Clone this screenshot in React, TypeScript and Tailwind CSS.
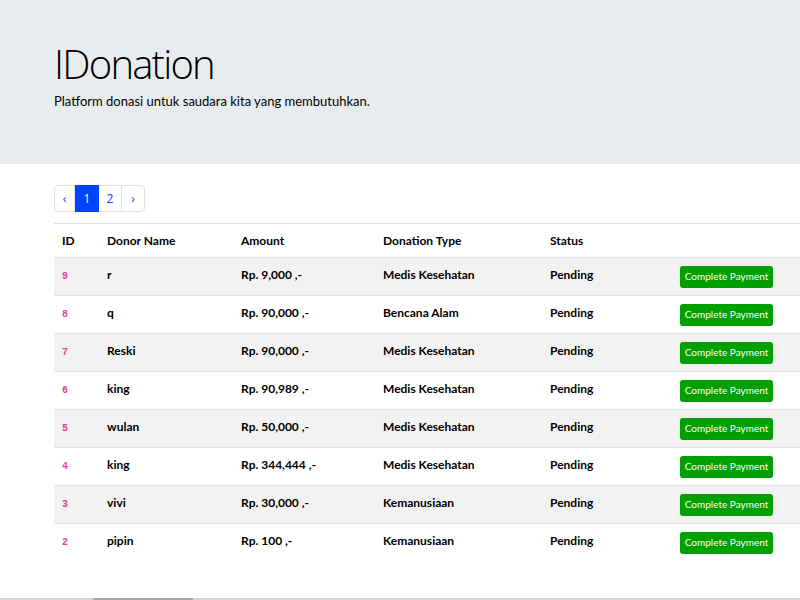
import React from "react";

type Donation = {
  id: number;
  name: string;
  amount: string;
  type: string;
  status: string;
};

const donations: Donation[] = [
  { id: 9, name: "r", amount: "Rp. 9,000 ,-", type: "Medis Kesehatan", status: "Pending" },
  { id: 8, name: "q", amount: "Rp. 90,000 ,-", type: "Bencana Alam", status: "Pending" },
  { id: 7, name: "Reski", amount: "Rp. 90,000 ,-", type: "Medis Kesehatan", status: "Pending" },
  { id: 6, name: "king", amount: "Rp. 90,989 ,-", type: "Medis Kesehatan", status: "Pending" },
  { id: 5, name: "wulan", amount: "Rp. 50,000 ,-", type: "Medis Kesehatan", status: "Pending" },
  { id: 4, name: "king", amount: "Rp. 344,444 ,-", type: "Medis Kesehatan", status: "Pending" },
  { id: 3, name: "vivi", amount: "Rp. 30,000 ,-", type: "Kemanusiaan", status: "Pending" },
  { id: 2, name: "pipin", amount: "Rp. 100 ,-", type: "Kemanusiaan", status: "Pending" },
];

const font = { fontFamily: "Lato, 'Open Sans', sans-serif" };
const titleFont = { fontFamily: "'Open Sans', 'Noto Sans', sans-serif" };

export default function App() {
  return (
    <div className="min-h-[600px] bg-white overflow-hidden text-black" style={font}>
      <header className="bg-[#e9ecef] h-[164px] pl-[54px] pt-[40px]">
        <h1 className="text-[40px] font-light leading-[48px] tracking-[-1.8px]" style={titleFont}>
          IDonation
        </h1>
        <p className="text-[13px] leading-[18px] mt-[4px]">
          Platform donasi untuk saudara kita yang membutuhkan.
        </p>
      </header>

      <div className="pl-[54px] pt-[21px]">
        <nav className="flex h-[27px] w-fit text-[12px]" style={titleFont}>
          <span className="w-[21px] flex items-center justify-center border border-[#dee2e6] rounded-l-[4px] text-[#0040ff]">‹</span>
          <span className="w-[24px] flex items-center justify-center bg-[#0043ff] text-white border border-[#0043ff]">1</span>
          <span className="w-[22px] flex items-center justify-center border-y border-[#dee2e6] text-[#0040ff]">2</span>
          <span className="w-[24px] flex items-center justify-center border border-[#dee2e6] rounded-r-[4px] text-[#0040ff]">›</span>
        </nav>

        <table className="mt-[11px] w-[820px] border-collapse text-[12px] font-bold">
          <thead>
            <tr className="h-[34px] border-t border-[#dee2e6]">
              <th className="w-[45px] text-left pl-[8px]">ID</th>
              <th className="w-[134px] text-left pl-[8px]">Donor Name</th>
              <th className="w-[142px] text-left pl-[8px]">Amount</th>
              <th className="w-[167px] text-left pl-[8px]">Donation Type</th>
              <th className="w-[130px] text-left pl-[8px]">Status</th>
              <th></th>
            </tr>
          </thead>
          <tbody>
            {donations.map((d, i) => (
              <tr
                key={d.id}
                className={
                  "h-[38px] border-t border-[#dee2e6] " + (i % 2 === 0 ? "bg-[#f2f2f2]" : "bg-white")
                }
              >
                <td className="pl-[8px] pb-[3px]">
                  <code className="text-[10px] text-[#e83e8c] font-bold">{d.id}</code>
                </td>
                <td className="pl-[8px] pb-[3px]">{d.name}</td>
                <td className="pl-[8px] pb-[3px]">{d.amount}</td>
                <td className="pl-[8px] pb-[3px]">{d.type}</td>
                <td className="pl-[8px] pb-[3px]">{d.status}</td>
                <td className="pl-[8px]">
                  <button className="h-[22px] w-[93px] rounded-[3px] bg-[#00a000] text-white text-[10px] font-normal">
                    Complete Payment
                  </button>
                </td>
              </tr>
            ))}
          </tbody>
        </table>
      </div>
      <div className="fixed bottom-0 left-0 right-0 h-[2px] bg-[#d6d6d6]">
        <div className="ml-[93px] w-[100px] h-full bg-[#a8a8a8]" />
      </div>
    </div>
  );
}
